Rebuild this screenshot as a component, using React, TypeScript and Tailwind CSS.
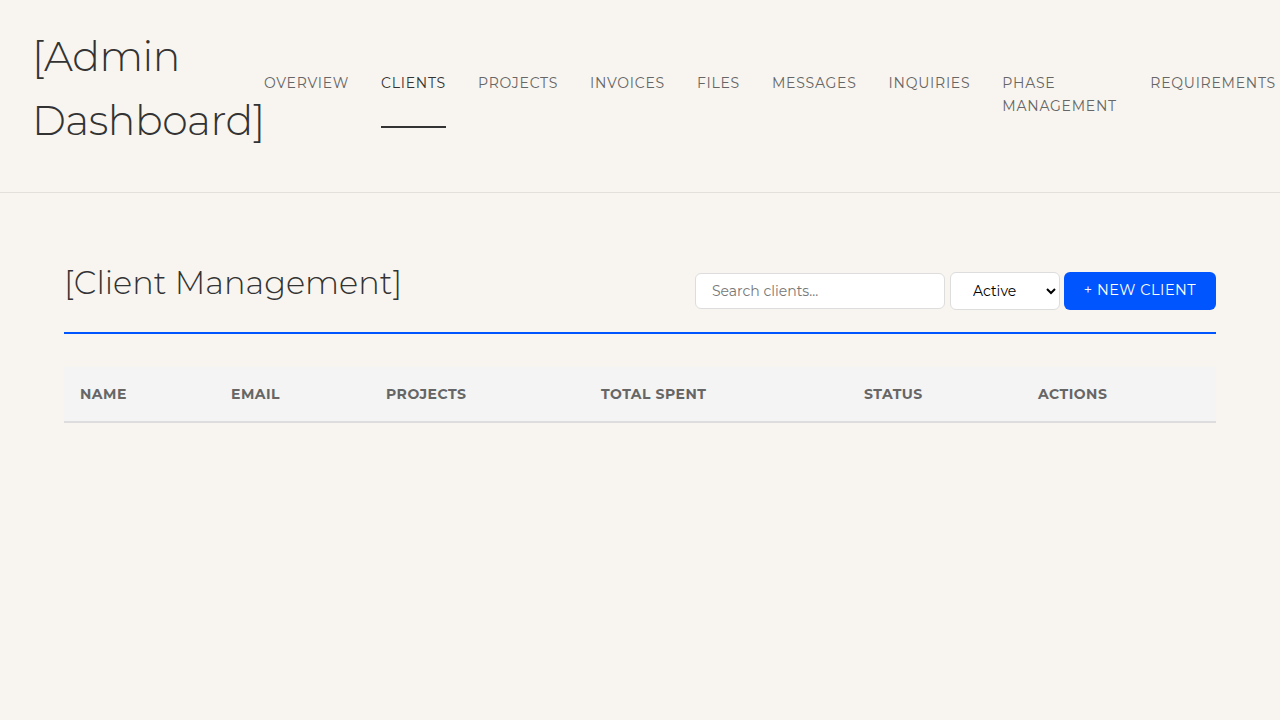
import { useState } from 'react'

const font = `font-['Montserrat','DejaVu_Sans',sans-serif]`

const navItems = [
  'Overview',
  'Clients',
  'Projects',
  'Invoices',
  'Files',
  'Messages',
  'Inquiries',
  'Phase Management',
  'Requirements',
]

const columns = [
  { label: 'Name', w: 'w-[151px]' },
  { label: 'Email', w: 'w-[155px]' },
  { label: 'Projects', w: 'w-[215px]' },
  { label: 'Total Spent', w: 'w-[263px]' },
  { label: 'Status', w: 'w-[174px]' },
  { label: 'Actions', w: 'w-[194px]' },
]

export default function App() {
  const [search, setSearch] = useState('')
  const [status, setStatus] = useState('active')
  const active = 'Clients'

  return (
    <div className={`${font} min-h-[720px] bg-[#f8f5f0] text-[#333] overflow-hidden`}>
      {/* HEADER */}
      <header className="flex items-start h-[193px] pl-8 pt-6 border-b border-[#e3e0db]">
        <h1 className="w-[232px] shrink-0 text-[41px] leading-[64px] font-light tracking-[-0.5px]">
          [Admin Dashboard]
        </h1>

        <nav className="flex gap-8 mt-[48px] whitespace-nowrap">
          {navItems.map((item) => (
            <a
              key={item}
              className={`block text-[14px] leading-[23px] uppercase tracking-[0.75px] ${
                item === 'Phase Management' ? 'w-[116px] whitespace-normal' : ''
              } ${item === active ? 'text-[#333] border-b-2 border-[#333] pb-[31px]' : 'text-[#666]'}`}
            >
              {item}
            </a>
          ))}
        </nav>
      </header>

      {/* CONTENT */}
      <main className="px-16 pt-[70px]">
        <div className="flex items-start justify-between border-b-2 border-[#0055ff] pb-[22px]">
          <h2 className="text-[32px] leading-[40px] font-light">[Client Management]</h2>

          <div className="flex items-center gap-[5px] mt-[9px]">
            <input
              className="w-[250px] h-[36px] rounded-md border border-[#ddd] bg-white px-4 text-[14px] text-[#333] placeholder:text-[#777] outline-none"
              placeholder="Search clients..."
              value={search}
              onChange={(e) => setSearch(e.target.value)}
            />
            <select
              className="w-[110px] h-[38px] rounded-md border border-[#ddd] bg-white pl-[18px] pr-1 text-[14px] text-black"
              value={status}
              onChange={(e) => setStatus(e.target.value)}
            >
              <option value="active">Active</option>
              <option value="inactive">Inactive</option>
              <option value="all">All</option>
            </select>
            <button className="w-[152px] h-[38px] rounded-md bg-[#0055ff] text-white text-[14.5px] uppercase tracking-[0.5px] -ml-[1px]">
              + New Client
            </button>
          </div>
        </div>

        <table className="w-full mt-[33px] border-collapse table-fixed">
          <thead>
            <tr className="bg-[#f4f4f4] border-b-2 border-[#ddd]">
              {columns.map((c) => (
                <th
                  key={c.label}
                  className={`${c.w} h-[55px] px-4 text-left text-[14px] font-bold uppercase tracking-[0.5px] text-[#666]`}
                >
                  {c.label}
                </th>
              ))}
            </tr>
          </thead>
          <tbody></tbody>
        </table>
      </main>
    </div>
  )
}
